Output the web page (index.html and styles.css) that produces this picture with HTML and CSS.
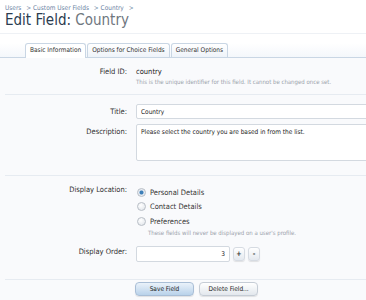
FILE: index.html
```html
<!DOCTYPE html>
<html lang="en">
<head>
    <meta charset="UTF-8">
    <title>Edit Field: Country</title>
    <link rel="stylesheet" href="styles.css">
</head>
<body>
    <div class="breadcrumb">
        <a href="#">Users</a> &gt;
        <a href="#">Custom User Fields</a> &gt;
        <a href="#">Country</a> &gt;
    </div>
    <div class="title-bar">
        <h1>Edit Field: <em>Country</em></h1>
    </div>

    <ul class="tabs">
        <li class="active">Basic Information</li>
        <li>Options for Choice Fields</li>
        <li>General Options</li>
    </ul>

    <form class="field-form">
        <div class="row">
            <label class="label">Field ID:</label>
            <div class="value">
                <div class="static">country</div>
                <p class="hint">This is the unique identifier for this field. It cannot be changed once set.</p>
            </div>
        </div>

        <div class="sep"></div>

        <div class="row">
            <label class="label pad">Title:</label>
            <div class="value"><input type="text" class="text" value="Country"></div>
        </div>
        <div class="row">
            <label class="label pad">Description:</label>
            <div class="value"><textarea class="text area">Please select the country you are based in from the list.</textarea></div>
        </div>

        <div class="sep sep-wide"></div>

        <div class="row">
            <label class="label">Display Location:</label>
            <div class="value">
                <label class="radio"><span class="dot checked"></span>Personal Details</label>
                <label class="radio"><span class="dot"></span>Contact Details</label>
                <label class="radio"><span class="dot"></span>Preferences</label>
                <p class="hint indent">These fields will never be displayed on a user's profile.</p>
            </div>
        </div>

        <div class="row centered">
            <label class="label">Display Order:</label>
            <div class="value spinner">
                <input type="text" class="text num" value="3">
                <button type="button" class="spin">+</button>
                <button type="button" class="spin">-</button>
            </div>
        </div>

        <div class="sep sep-submit"></div>

        <div class="row submit">
            <div class="label"></div>
            <div class="value">
                <button type="submit" class="button primary">Save Field</button>
                <button type="button" class="button">Delete Field...</button>
            </div>
        </div>
    </form>
</body>
</html>
```

FILE: styles.css
```css
body, h1, p, ul, li, form, div, input, textarea, button, label {
    margin: 0;
    padding: 0;
    box-sizing: border-box;
    font-family: 'DejaVu Sans Condensed', 'DejaVu Sans', Tahoma, sans-serif;
}

html, body {
    height: 100%;
}

body {
    background-color: #ffffff;
    font-size: 7.5px;
    color: #222;
    overflow: hidden;
    display: flex;
    flex-direction: column;
}

/* cabecera */
.breadcrumb {
    padding: 4px 5px 0;
    height: 14px;
    color: #6d84a4;
    font-size: 6.5px;
}

.breadcrumb a {
    color: #6d84a4;
    text-decoration: none;
    margin-right: 3px;
}

.title-bar {
    padding: 0 5px 5px;
    border-bottom: 1px solid #eef1f5;
}

h1 {
    font-size: 15px;
    font-weight: normal;
    color: #2b3c4f;
    line-height: 16px;
}

h1 em {
    font-style: normal;
    color: #6f7780;
}

/* pestañas */
.tabs {
    list-style: none;
    display: flex;
    padding-left: 25px;
    margin-top: 9px;
    height: 15px;
    border-bottom: 1px solid #c9d6e4;
    background: linear-gradient(to bottom, #ffffff, #f4f7fb);
}

.tabs li {
    padding: 0 4px;
    margin-right: 1px;
    height: 14px;
    line-height: 13px;
    font-size: 6.5px;
    color: #333;
    border: 1px solid #c9d6e4;
    border-bottom: none;
    border-radius: 3px 3px 0 0;
    background: linear-gradient(to bottom, #ffffff, #eef3f9);
}

.tabs li.active {
    background: #ffffff;
    height: 15px;
}

/* formulario */
.field-form {
    background-color: #f9fafc;
    padding-top: 9px;
    flex: 1;
}

.row {
    display: flex;
    margin-bottom: 5px;
}

.row.centered {
    align-items: center;
}

.label {
    width: 136px;
    padding-right: 9px;
    text-align: right;
    color: #2e2e2e;
    flex-shrink: 0;
    line-height: 10px;
}

.label.pad {
    padding-top: 3px;
}

.value {
    flex: 1;
}

.static {
    line-height: 10px;
    color: #222;
}

.hint {
    font-size: 6px;
    color: #9aa2ab;
    line-height: 9px;
}

.hint.indent {
    padding-left: 12px;
    margin-top: -1px;
}

.sep {
    border-top: 1px solid #e6ebf1;
    margin: 8px 0 9px 5px;
}

.sep-wide {
    margin-top: 14px;
    margin-bottom: 9px;
}

.sep-submit {
    margin-top: 17px;
    margin-bottom: 2px;
}

.text {
    width: 240px;
    height: 15px;
    border: 1px solid #d3d9e0;
    border-radius: 2px;
    background: #ffffff;
    font-size: 6.5px;
    padding: 0 4px;
    color: #222;
    outline: none;
}

.text.area {
    display: block;
    height: 37px;
    padding: 3px 4px;
    resize: none;
}

.radio {
    display: flex;
    align-items: center;
    height: 14.5px;
    color: #333;
}

.dot {
    width: 7px;
    height: 7px;
    border-radius: 50%;
    border: 1px solid #b8bec6;
    background: radial-gradient(circle at 40% 35%, #ffffff, #dde2e8);
    margin: 0 4px 0 1px;
}

.dot.checked {
    background: radial-gradient(circle at 50% 50%, #3d7fb8 0, #3d7fb8 1.5px, #e8edf3 2.5px);
}

.spinner {
    display: flex;
    align-items: center;
    margin-top: 4px;
}

.text.num {
    width: 94px;
    height: 16px;
    text-align: right;
}

.spin {
    width: 12px;
    height: 14px;
    margin-left: 3px;
    border: 1px solid #d6dbe2;
    border-radius: 3px;
    background: linear-gradient(to bottom, #ffffff, #e4e9ef);
    font-size: 7px;
    font-weight: bold;
    color: #333;
    box-shadow: 0 1px 1px rgba(0, 0, 0, 0.1);
}

.button {
    width: 59px;
    height: 14px;
    border: 1px solid #c5ccd5;
    border-radius: 4px;
    background: linear-gradient(to bottom, #ffffff, #e2e7ed);
    font-size: 6.5px;
    color: #222;
    margin-right: 3px;
    box-shadow: 0 1px 1px rgba(0, 0, 0, 0.1);
}

.button.primary {
    margin-left: -1px;
    background: linear-gradient(to bottom, #eaf2fa, #b9d2ea);
    border-color: #a9bed6;
}
```
